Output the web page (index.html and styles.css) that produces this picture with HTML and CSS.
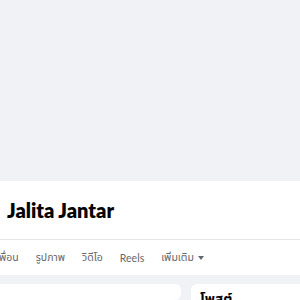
FILE: index.html
```html
<!DOCTYPE html>
<html lang="th">
<head>
  <meta charset="UTF-8">
  <meta name="viewport" content="width=device-width, initial-scale=1.0">
  <title>Jalita Jantar</title>
  <link rel="stylesheet" href="styles.css">
</head>
<body>
  <div class="cover"></div>
  <div class="profile-head">
    <div class="name-row">
      <h1>Jalita Jantar</h1>
    </div>
    <div class="tabs">
      <span class="tab">เพื่อน</span>
      <span class="tab">รูปภาพ</span>
      <span class="tab">วิดีโอ</span>
      <span class="tab">Reels</span>
      <span class="tab">เพิ่มเติม <span class="caret"></span></span>
    </div>
  </div>
  <div class="main">
    <div class="card card-left"></div>
    <div class="card card-right">
      <h2>โพสต์</h2>
    </div>
  </div>
</body>
</html>
```

FILE: styles.css
```css
html, body {
  margin: 0;
  overflow: hidden;
}
body {
  font-family: "Lato", "Noto Sans Thai", "Noto Sans", sans-serif;
  background-color: #f0f2f5;
  width: 300px;
  height: 300px;
}
.cover {
  height: 181px;
  background-color: #f0f2f5;
}
.profile-head {
  background-color: #fff;
}
.name-row {
  height: 58px;
  display: flex;
  align-items: center;
  padding-left: 7px;
}
h1 {
  margin: 0;
  font-size: 20px;
  font-weight: 800;
  color: #050505;
}
.tabs {
  border-top: 1px solid #e4e6eb;
  height: 35px;
  display: flex;
  align-items: center;
  gap: 17px;
  margin-left: -4px;
  font-size: 10.5px;
  color: #65676b;
  white-space: nowrap;
}
.tab {
  display: flex;
  align-items: center;
  gap: 4px;
}
.caret {
  width: 0;
  height: 0;
  border-left: 3px solid transparent;
  border-right: 3px solid transparent;
  border-top: 4px solid #65676b;
}
.main {
  display: flex;
  gap: 10px;
  padding-top: 9px;
  margin-left: -20px;
}
.card {
  background-color: #fff;
  border-radius: 6px;
  height: 16px;
}
.card-left {
  flex: 0 0 201px;
}
.card-right {
  flex: 0 0 100px;
  padding: 6px 9px;
}
h2 {
  margin: 0;
  font-size: 14px;
  font-weight: 700;
  line-height: 18px;
  color: #050505;
}
```
